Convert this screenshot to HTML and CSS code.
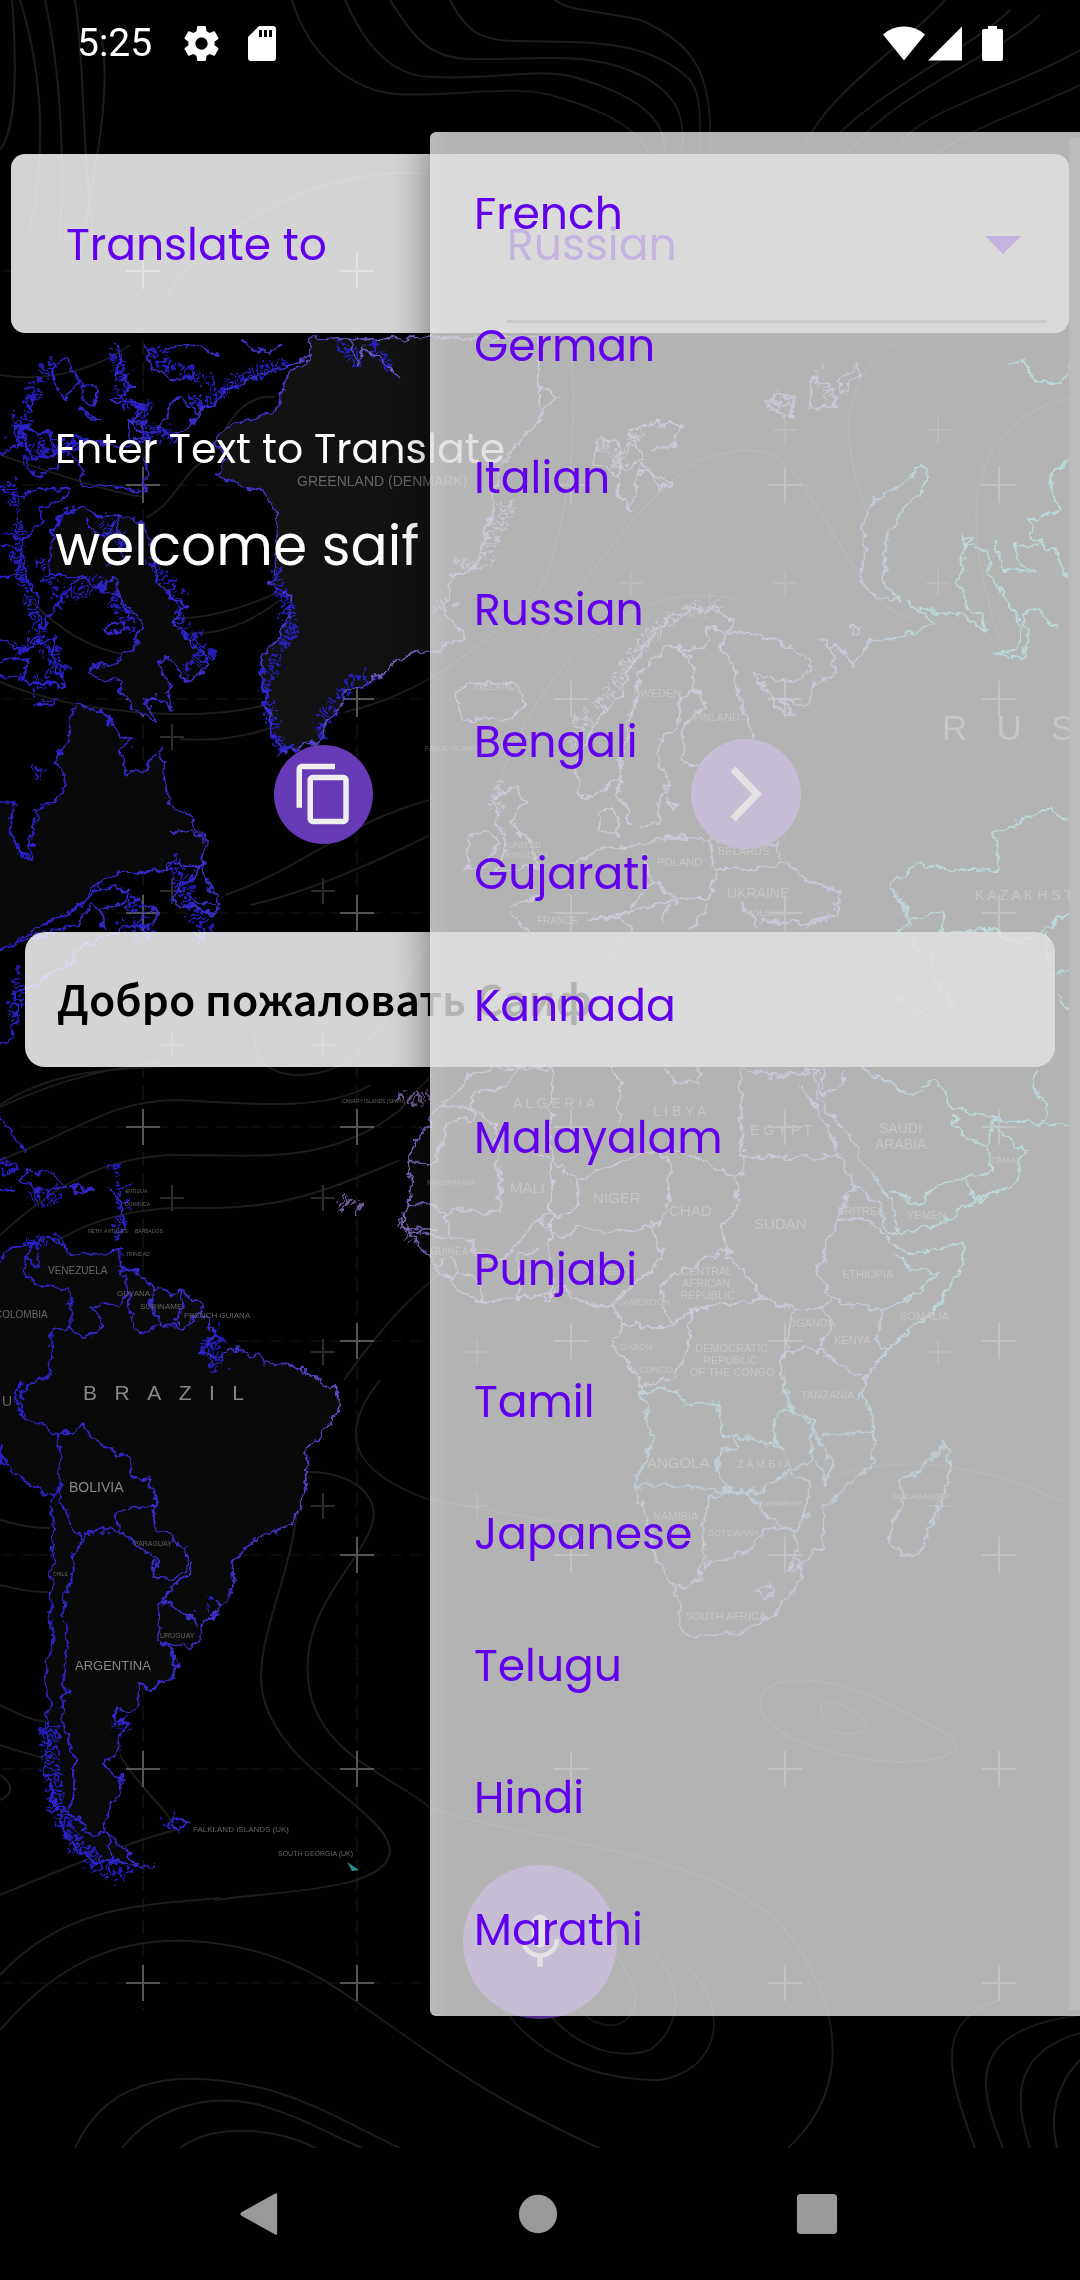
FILE: index.html
```html
<!DOCTYPE html>
<html lang="en">
<head>
<meta charset="utf-8">
<meta name="viewport" content="width=device-width, initial-scale=1">
<title>Translator</title>
<link rel="stylesheet" href="styles.css">
</head>
<body>
<svg class="map" viewBox="0 0 1080 2148" preserveAspectRatio="xMidYMin slice" aria-hidden="true">
  <defs>
    <linearGradient id="west" gradientUnits="userSpaceOnUse" x1="0" y1="0" x2="1568" y2="0">
      <stop offset="0" stop-color="#2a1fc8"/><stop offset=".5" stop-color="#3f33c4"/><stop offset=".75" stop-color="#7468c0"/><stop offset="1" stop-color="#8278c8"/>
    </linearGradient>
    <linearGradient id="east" gradientUnits="userSpaceOnUse" x1="0" y1="0" x2="1568" y2="0">
      <stop offset="0" stop-color="#8f70c0"/><stop offset=".35" stop-color="#8070c8"/><stop offset=".6" stop-color="#5c70d0"/><stop offset=".7" stop-color="#30c0c8"/><stop offset="1" stop-color="#20c8d0"/>
    </linearGradient>
    <linearGradient id="south" gradientUnits="userSpaceOnUse" x1="0" y1="0" x2="0" y2="600">
      <stop offset="0" stop-color="#30a8c0"/><stop offset=".5" stop-color="#5088c8"/><stop offset="1" stop-color="#8060c8"/>
    </linearGradient>
    <filter id="coast" filterUnits="userSpaceOnUse" x="0" y="0" width="1080" height="2148" color-interpolation-filters="sRGB">
      <feTurbulence type="fractalNoise" baseFrequency=".09" numOctaves="3" seed="4"/>
      <feDisplacementMap in="SourceGraphic" scale="13" xChannelSelector="R" yChannelSelector="G"/>
    </filter>
    <filter id="fjords" filterUnits="userSpaceOnUse" x="0" y="0" width="1080" height="2148" color-interpolation-filters="sRGB">
      <feTurbulence type="fractalNoise" baseFrequency=".11" numOctaves="2" seed="9"/>
      <feDisplacementMap in="SourceGraphic" scale="24" xChannelSelector="R" yChannelSelector="G"/>
    </filter>
    <pattern id="grid" patternUnits="userSpaceOnUse" x="36" y="164" width="214" height="214">
      <path d="M107 0V214" stroke="#1b1b1b" stroke-width="1" stroke-dasharray="14 8"/>
      <path d="M0 107H214" stroke="#161616" stroke-width="1" stroke-dasharray="12 8"/>
      <path d="M90 107H124M107 89V125" stroke="#555" stroke-width="2"/>
    </pattern>
    <g id="tick"><path d="M-12 0H12M0-13V13" stroke="#2c2c2c" stroke-width="2"/></g>
  </defs>

  <g class="contour">
    <path d="M292 0C310 60 355 90 395 94C450 98 520 82 560 98C620 115 640 135 650 154M345 0C365 45 390 75 430 77C500 80 530 68 570 76C640 95 665 120 665 150M390 0C415 40 430 58 470 59C540 60 590 50 640 75C680 95 685 120 682 150M450 0C465 30 480 42 520 41C590 42 650 40 690 80C705 100 698 140 700 150M555 0C570 12 600 10 640 20C700 45 712 80 710 150"/>
    <path d="M945 0C900 50 830 90 805 145M1010 10C970 50 860 100 825 150M1040 15C990 60 900 90 850 150M1080 50C1010 90 920 110 900 145M1080 85C1030 110 960 130 930 160"/>
    <path d="M20 0C45 80 45 160 30 230M45 0C60 70 65 150 60 240M75 0C85 60 82 170 95 250M0 150C15 130 18 80 12 0M100 30C115 90 90 190 80 260M165 300C210 220 340 160 440 175"/>
    <path d="M0 375C60 385 110 360 130 345M0 455C60 475 100 490 143 497M146 518C180 500 180 470 214 455C230 410 250 395 275 397M180 618C220 618 260 600 285 590M190 633C230 635 260 615 280 600M0 682C80 715 200 722 265 705M30 600C60 630 90 650 130 655M180 739C220 742 250 735 270 728M345 712C420 695 480 650 540 590C570 520 580 420 570 330"/>
    <path d="M225 895C300 870 350 820 430 800M250 905C320 890 400 850 430 835M0 1105C60 1065 130 1070 180 1065M255 1035C250 1080 310 1085 350 1060C390 1030 410 960 430 940M0 1107C60 1080 100 1070 160 1062M0 1160C80 1130 110 1100 180 1100C260 1105 330 1110 370 1085M0 1235C50 1190 100 1155 180 1155C260 1155 330 1165 400 1110C430 1070 480 1040 520 980M0 1300C40 1230 120 1205 200 1208C280 1210 330 1190 400 1160"/>
    <path d="M344 1380C400 1300 430 1280 500 1230M380 1380C340 1430 345 1470 430 1500C500 1510 560 1530 620 1520M308 1472C350 1472 385 1495 370 1530C355 1570 290 1620 312 1700C330 1760 400 1780 430 1808C560 1850 740 1850 800 1950C850 2030 840 2100 788 2148M297 1510C290 1580 255 1640 262 1690C275 1770 390 1810 390 1852C385 1890 290 1890 215 1900"/>
    <path d="M0 1520C20 1525 30 1528 50 1528M0 1585C20 1590 30 1592 48 1592M0 1705C20 1715 30 1720 46 1722M0 1745C30 1755 50 1760 70 1765M0 1775C15 1785 12 1795 0 1800M120 1755C140 1790 170 1810 175 1830C120 1845 60 1870 0 1895M0 1975C60 1910 130 1905 220 1898"/>
    <path d="M0 2030C60 1960 120 1938 190 1941C270 1945 320 1975 358 2003C420 2045 480 2095 599 2148M75 2148C110 2070 190 2070 270 2090C320 2105 350 2125 400 2148M122 2148C160 2100 220 2095 260 2105C310 2120 330 2135 362 2148M180 2148C210 2125 270 2125 316 2148"/>
    <path d="M505 2010C540 2060 600 2080 660 2080C720 2070 730 2010 690 1970M550 2015C580 2050 620 2060 650 2050C690 2020 680 1970 640 1940M580 2010C600 2035 640 2030 635 1990C630 1975 620 1960 615 1955M975 2148C950 2080 930 2020 1000 2000M1003 2148C975 2080 970 2030 1080 2015M1030 2148C1010 2090 1020 2050 1080 2033M1057 2148C1048 2110 1060 2080 1080 2060"/>
    <path d="M765 1690C790 1670 850 1680 920 1720C980 1745 960 1760 900 1762C830 1760 740 1730 765 1690ZM822 1703C840 1700 870 1718 866 1730C850 1738 815 1735 822 1703ZM870 520C830 420 850 370 900 340M540 640C600 560 650 490 700 460C790 430 790 470 850 560C870 600 890 610 910 620M500 780C560 620 660 580 740 600M1000 640C960 520 960 420 1080 395M840 1475C900 1455 980 1460 1080 1510"/>
  </g>
  <rect class="grid" y="160" width="1080" height="1850" fill="url(#grid)"/>
  <path d="M0 1900H1080V2148H0Z" fill="none"/>
  <g>
    <use href="#tick" x="172" y="1198"/><use href="#tick" x="323" y="1198"/><use href="#tick" x="172" y="1045"/><use href="#tick" x="323" y="1045"/><use href="#tick" x="172" y="891"/><use href="#tick" x="323" y="891"/><use href="#tick" x="172" y="737"/><use href="#tick" x="323" y="1352"/><use href="#tick" x="323" y="1506"/><use href="#tick" x="477" y="1352"/><use href="#tick" x="477" y="1506"/><use href="#tick" x="631" y="583"/><use href="#tick" x="785" y="583"/><use href="#tick" x="938" y="583"/><use href="#tick" x="785" y="430"/><use href="#tick" x="938" y="430"/><use href="#tick" x="938" y="1352"/><use href="#tick" x="938" y="1506"/>
  </g>

  <g filter="url(#coast)">
    <g class="coast" stroke="url(#west)">
      <g transform="translate(0 360) scale(.3444 .3635)">
        <path class="land-hi" d="M1568-60L900-60 900 0 830 50 820 95 800 140 720 160 640 200 625 230 660 260 630 320 700 345 770 365 800 410 805 500 800 560 790 620 850 650 840 700 810 760 760 820 770 900 775 960 795 1030 820 1075 880 1065 930 1040 950 990 990 950 1000 910 1060 890 1130 850 1180 810 1250 800 1350 760 1290 700 1310 600 1390 560 1430 400 1450 290 1568 160Z"/>
        <path class="land-lo" d="M150 590L150 480 180 420 240 405 300 430 370 430 420 450 440 540 460 600 490 650 540 680 500 720 540 760 570 790 610 820 580 860 540 885 510 840 490 815 460 830 480 870 500 930 500 960 450 930 420 930 460 1000 400 970 370 940 340 880 290 885 250 860 270 840 340 840 350 810 400 780 410 730 380 690 340 640 290 630 240 600Z"/>
        <path class="land-lo" d="M-20 1220L40 1220 30 1300 60 1360 90 1370 100 1240 180 1200 185 1150 160 1100 200 1050 215 950 310 970 340 1030 390 1040 350 1080 370 1140 430 1120 470 1060 475 1140 490 1220 560 1270 600 1320 580 1400 520 1385 430 1410 350 1405 280 1450 210 1515 100 1568-20 1640Z"/>
        <path d="M210 1515L300 1450 380 1460 350 1500 290 1510 300 1568M590 1380L550 1430 495 1490 560 1500 620 1530 640 1490 600 1440ZM500 1300L560 1290 590 1320M0 470L70 490 130 440 110 400 170 390 210 350 90 360 60 380 0 350M80 480L60 520 80 620 110 640 120 740 190 640 240 600 150 590M0 600L50 590 60 520 0 510M0 770L60 800 110 780 160 760 150 820 190 900 120 890 60 880 90 820 0 830M0 870L60 870M120 940L170 930 150 950 100 950M320 730L360 720 350 750 310 750ZM0 260L60 230 40 180 100 190 180 220 170 300 120 320 70 290M340 30L390 70 320 110 420 130 380 170 440 210 520 100 570 150 620 110 700 60 800 30 900-10M240 60L290 90 270 130 240 110ZM230 140L290 160 260 160ZM70 110L100 90 90 140ZM150 20L200 0 230 60 190 110 160 60ZM370 170L420 170 410 220 370 220ZM240 300L190 240 250 220 360 240 430 220 420 370 330 340 240 350ZM620 110L560 170 500 210 460 180M60 190L150 200 160 260 90 270ZM250 440L300 500 340 440M340 430L360 560 300 560M290 630L330 600 360 680 390 720M330-50L350 0 330 60M420-40L440 20 520 60 560 40M480-30L560-40 640-10M700-60L760-20 820-40M1010-60L1040 20 1060-40 1120 10 1160 50"/>
        <path d="M1320 910L1370 890 1500 895 1525 950 1460 990 1340 990ZM1440 1200L1500 1170 1520 1220 1480 1270 1540 1330 1565 1390 1440 1410 1480 1340 1440 1270ZM1370 1310L1420 1290 1450 1330 1400 1400 1350 1390ZM1470 1500L1568 1480M1480 1520L1530 1568"/>
      </g>
      <g transform="translate(0 900) scale(.3444 .3333)">
        <path d="M0 155L90 110 220 80 270 15 295 30 300 90M360 20L400 0 470 40 440 70 370 80 310 110 215 150 210 190 160 210 110 250 50 280 40 400 0 430M0 640L30 690 80 760M0 780L50 800 20 820 0 810M50 850L80 815 150 820 200 860 120 870ZM215 855L270 870 220 870ZM0 865L40 870M0 1320L40 1350 80 1390 145 1390M490 5L540 15 620 40M560 10L640 10M315 865L350 910 362 960 345 1020"/>
        <path class="land-lo" d="M-20 1100L30 1050 80 1040 110 1015 150 1020 190 1040 200 1065 280 1060 350 1050 350 1100 400 1120 450 1170 520 1175 580 1210 610 1280 620 1310 580 1360 640 1370 660 1345 740 1365 760 1390 850 1395 910 1430 970 1460 985 1500 980 1540 930 1600 890 1650 888 1740 875 1810 850 1880 770 1905 690 1960 675 2000 680 2050 640 2120 600 2160 580 2210 560 2240 500 2240 470 2220 500 2255 515 2300 500 2340 450 2365 400 2360 400 2410 380 2440 340 2425 335 2450 375 2480 350 2500 345 2560 305 2590 320 2620 355 2630 350 2670 305 2740 310 2800 400 2890 290 2890 220 2850 180 2780 160 2700 130 2620 140 2530 135 2450 145 2400 130 2330 155 2220 145 2080 155 1920 150 1795 60 1730-20 1660Z"/>
        <path d="M80 1060L70 1100 100 1150 205 1170 205 1290 240 1310 280 1290 300 1270 265 1220 350 1210 375 1180 380 1260 410 1300 460 1280 540 1280 590 1230M350 1100L375 1180M450 1170L440 1210 470 1280M520 1175L530 1220 510 1270M150 1285L150 1340 140 1430 70 1450 65 1500M100 1020L80 1060 100 1100 115 1060M205 1285L150 1285"/>
        <path class="land-lo" d="M1600 500L1510 500 1360 520 1340 570 1270 625 1230 690 1180 780 1195 830 1190 910 1165 950 1190 1010 1230 1050 1270 1100 1310 1150 1400 1215 1480 1190 1600 1195Z"/>
        <path d="M1280 615L1370 625 1370 660 1295 665 1290 730 1275 740 1270 785 1175 785M1370 600L1375 630 1440 680 1455 935 1350 935 1310 920 1290 950 1250 910 1190 910M1290 950L1310 1010 1370 1020 1380 1060 1430 1080 1480 1060 1568 950M1370 620L1370 580 1470 560 1510 500M1180 980L1260 985 1190 1000 1300 1010M1270 1090L1310 1070 1330 1110 1300 1150M1400 1215L1400 1160 1340 1110M1510 1190L1500 1060 1568 1050"/>
      </g>
      <g transform="translate(0 1380) scale(.3444 .3333)">
        <path d="M60 0L50 70 75 120 130 135 150 165 200 160 250 130 260 170 310 200 375 235 385 290 430 300 455 350 445 385 380 375 345 400 340 450 300 455 240 455 235 490 205 525 210 590 185 650 180 720 200 780 185 860 190 930 180 1010 195 1080 215 1120 215 1230 200 1300 240 1330 240 1360 310 1360M165 165L178 230 175 310 150 355M165 330L195 400 230 480M340 450L400 500 460 540 440 590 500 598 540 570 545 500 510 490 500 455 450 445 445 385M555 540L555 580 500 620 475 665 520 690 580 740M475 665L465 700 462 780M310 1360L330 1440 410 1460 450 1455M0 250L0 200M490 1335L510 1315 550 1330 520 1350ZM625 660L640 680 610 715"/>
      </g>
    </g>
    <g class="coast" stroke="url(#east)">
      <g transform="translate(540 360) scale(.3444 .3635)">
        <path d="M115 1190L105 1120 150 1010 230 930 270 830 350 730 430 690 500 685 570 715 540 745 610 755 700 775 760 810 790 850 750 885 680 880 615 855 650 900 690 960 740 975 690 930 780 945 800 880 850 870 850 790 820 770 880 800 910 840 960 770 1040 765 1110 735 1150 735 1075 665 1120 690 1200 695 1300 740 1290 710 1240 680 1215 610 1235 510 1295 520 1310 590 1360 670 1395 725 1385 800 1320 805 1400 825 1420 750 1400 700 1440 680 1500 740"/>
        <path d="M380 780L440 820 455 910 410 925 405 990 345 1050 345 1110 375 1160 345 1210 340 1270 280 1290M455 910L485 945 415 1010 425 1110 520 1120 600 1100M530 745L530 790 560 840 580 920 600 1000 620 1040M530 745L480 740 480 790 420 795 380 780M380 780L290 860 270 960 240 1060 230 1200 265 1280M115 1190L150 1210 200 1170 230 1150"/>
        <path d="M1110 290L1135 320 1070 400 1010 470 1000 560 1000 620 1050 660 980 655 930 610 940 540 940 440 980 380 1070 330ZM170 1250L210 1230 230 1260 220 1310 180 1290ZM90 1390L180 1340 300 1335 370 1310 490 1320 510 1400 490 1480 400 1480 320 1440 300 1350M490 1320L600 1330 690 1330 700 1380M510 1400L620 1400 720 1385 780 1430 870 1460 860 1520 770 1560M490 1490L440 1568M580 1500L640 1560M370 1490L360 1540M130 1540L250 1520 320 1440M1075 1568L1070 1530 1020 1450 1060 1410 1100 1385 1200 1405 1330 1400 1330 1340 1310 1300 1400 1270 1470 1235 1536 1270M1536 280L1490 310 1480 370 1520 410 1415 445 1430 490 1500 530 1530 600M1320 500L1350 580 1440 590 1390 560 1380 510 1450 510M900 740L930 730 930 750 910 760ZM1225 480L1255 490 1235 510ZM1360 10L1400 0 1430 50 1520 65 1536 20M165 215L230 225 235 300 300 280 260 200 320 170 405 180 390 240 320 240M235 300L215 350 265 415 290 300 380 340 350 360 300 290M160 220L160 280 230 320M0 70L50 100 0 150M370 1210L390 1220 380 1240ZM650 120L690 90 740 110 720 155ZM780 130L790 50 850 80 860 130ZM870 50L920 10 930 40 880 90Z"/>
      </g>
      <g transform="translate(540 900) scale(.3444 .3333)">
        <path d="M210 500L230 560 225 650 240 700M580 510L590 770 590 820 570 830 370 740 355 760 375 800 370 940 325 980M590 770L870 770M760 560L800 620 840 700 870 770 920 870 980 910 1010 1000 1040 1010M810 600L900 700 930 780 1000 860 1030 930 1040 1000 1170 970 1260 900 1370 860 1410 750 1330 690 1320 650 1300 740 1220 710 1200 650M1105 915L1150 860 1310 810 1305 745M1235 840L1260 900M1020 880L1105 915M1110 560L1150 545 1200 620 1290 650 1340 660 1536 680M1020 1030L1060 1065 1225 1030 1220 1100 1160 1220 1010 1350 940 1440 930 1500M985 1225L985 1340 1010 1360M1030 1060L1060 1100 1155 1120 1080 1195 1000 1225 910 1220 850 1190 800 1120 870 960 890 880 920 870M870 960L940 950 1020 1030M850 1190L820 1220 740 1230 710 1350 700 1400 720 1500M820 1220L845 1270 810 1350 930 1430M710 1350L810 1350M570 830L570 930 530 970 540 1050 370 1140 350 1180 360 1240 390 1270 440 1230 540 1215 650 1195 540 1050M650 1195L740 1230M440 1230L430 1330 390 1430 300 1460M0 950L80 945 110 900 108 840 0 760M110 840L350 740M0 960L60 1020 110 980 200 995 320 985 360 1070 270 1160 215 1210 240 1280M215 1210L130 1215 70 1160 0 1190M240 1280L210 1340 280 1420 295 1470 400 1470M240 1275L390 1275M940 505L1050 575 1110 575M820 500L820 585 880 560 880 510M580 510L690 530 800 510 810 600M360 500L400 550 460 550 460 500M1040 0L1080 50 1040 100 1130 160 1150 240 1200 320 1130 350 1030 290M1080 50L1170 40 1170 100 1250 90 1310 90 1400 130 1470 80 1536 45M1430 560L1440 500M1430 560L1480 630 1450 680M130 60L230 50 300 20 400 0M230 50L260 90 180 200M640 60L740 70 840 60M1470 100L1480 220 1536 220M1500 290L1536 330"/>
      </g>
    </g>
    <g class="coast" stroke="url(#south)" transform="translate(380 1380) scale(.4464 .4208)">
      <path d="M590 25L665 25 680 65 760 50 765 130 800 130 800 165 760 165 760 235 790 262 850 262 910 220 960 240 955 320 930 355 870 350 820 410 730 440 722 345 738 275 820 262M570 250L610 150 600 90 580 10M570 250L690 252 790 265M570 250L600 330 620 430 665 500 680 605 740 610 810 600 880 560 945 470 945 430 995 400 995 300 1060 240 1105 200 1105 110 1080 20M720 430L715 475 690 490 650 480M820 262L870 330 930 355 935 430M905 0L920 70 970 100 965 190 910 220M920 70L885 90 885 150 905 165 830 140 800 130M990 135L1105 120M975 190L1000 245 1015 200 990 160 970 100M1265 150L1280 220 1240 330 1210 410 1180 420 1145 400 1145 350 1170 300 1165 240 1215 210ZM845 500L875 485 882 505 858 525ZM915 435L935 425 940 445 920 450Z"/>
    </g>
  </g>
  <g class="fjord" filter="url(#fjords)">
    <path d="M277 570L285 600 292 630 275 660 265 680 266 700 272 720 277 745 290 752M318 735L332 705 348 685 368 678M150 560L165 580 180 600 180 620 195 640 208 655 185 668M112 600L125 620 135 635M15 650L45 640 60 670 30 690M50 360L30 400 15 440 50 450 90 440 20 460M115 350L125 380 120 400 145 410 150 430 180 440M160 360L195 375 215 385M150 350L170 365M190 400L210 400 235 380 260 370 290 360M340 345L360 365M370 345L395 370M10 480L20 520 15 560 30 600 40 640M170 860L195 900 175 880 205 930 190 945M130 900L150 935 120 925M115 1165L122 1200 118 1240M28 1200L60 1195M28 1245L60 1240M200 1355L215 1340 215 1370M40 560L60 600 80 590 110 580M100 520L130 550M20 970L13 1020"/>
    <path class="thick" d="M52 1725L50 1760 55 1800 70 1835 90 1858 110 1868 130 1878M120 1722L122 1730"/>
    <path d="M165 1825L185 1822M205 1610L215 1600M33 770L42 772"/>
    <path class="pale" d="M455 560L480 570 495 540 510 500M435 610L450 600M575 750L580 720 610 690 630 660 660 625 690 610 720 605M500 780L495 810M770 400L790 405M815 370L825 395 840 400M600 440L620 460 650 420M400 1100L430 1095M340 1198L360 1210M400 1220L410 1240"/>
  </g>
  <path d="M347 1862l12 8-7 1z" fill="#2c8f8a"/>

  <g class="labels">
    <text x="297" y="486" font-size="14">GREENLAND (DENMARK)</text>
    <text x="473" y="690" font-size="10">ICELAND</text>
    <text x="633" y="697" font-size="11">SWEDEN</text>
    <text x="693" y="721" font-size="11">FINLAND</text>
    <text x="657" y="866" font-size="11">POLAND</text>
    <text x="718" y="855" font-size="11">BELARUS</text>
    <text x="727" y="898" font-size="14">UKRAINE</text>
    <text x="745" y="916" font-size="9">MOLDOVA</text>
    <text x="537" y="924" font-size="10">FRANCE</text>
    <text x="508" y="848" font-size="9">UNITED</text>
    <text x="505" y="858" font-size="9">KINGDOM</text>
    <text x="425" y="751" font-size="7">FAROE ISLANDS</text>
    <text x="942" y="740" font-size="35">R&#160;&#160;&#160;U&#160;&#160;&#160;S</text>
    <text x="975" y="900" font-size="14">K A Z A K H S T</text>
    <text x="513" y="1108" font-size="14">A L G E R I A</text>
    <text x="653" y="1116" font-size="14">L I B Y A</text>
    <text x="750" y="1135" font-size="14">E G Y P T</text>
    <text x="879" y="1133" font-size="14">SAUDI</text>
    <text x="875" y="1149" font-size="14">ARABIA</text>
    <text x="510" y="1193" font-size="15">MALI</text>
    <text x="593" y="1203" font-size="15">NIGER</text>
    <text x="669" y="1216" font-size="15">CHAD</text>
    <text x="754" y="1229" font-size="15">SUDAN</text>
    <text x="837" y="1215" font-size="11">ERITREA</text>
    <text x="907" y="1219" font-size="11">YEMEN</text>
    <text x="991" y="1163" font-size="9">OMAN</text>
    <text x="842" y="1278" font-size="11">ETHIOPIA</text>
    <text x="900" y="1320" font-size="11">SOMALIA</text>
    <text x="834" y="1344" font-size="11">KENYA</text>
    <text x="788" y="1327" font-size="11">UGANDA</text>
    <text x="801" y="1399" font-size="11">TANZANIA</text>
    <text x="681" y="1275" font-size="11">CENTRAL</text>
    <text x="682" y="1287" font-size="11">AFRICAN</text>
    <text x="680" y="1299" font-size="11">REPUBLIC</text>
    <text x="617" y="1305" font-size="9">CAMEROON</text>
    <text x="620" y="1350" font-size="9">GABON</text>
    <text x="639" y="1373" font-size="9">CONGO</text>
    <text x="695" y="1352" font-size="11">DEMOCRATIC</text>
    <text x="703" y="1364" font-size="11">REPUBLIC</text>
    <text x="690" y="1376" font-size="11">OF THE CONGO</text>
    <text x="427" y="1185" font-size="8">MAURITANIA</text>
    <text x="430" y="1255" font-size="10">GUINEA</text>
    <text x="594" y="1275" font-size="10">NIGERIA</text>
    <text x="647" y="1468" font-size="15">ANGOLA</text>
    <text x="737" y="1468" font-size="11">Z A M B I A</text>
    <text x="653" y="1520" font-size="11">NAMIBIA</text>
    <text x="708" y="1536" font-size="9">BOTSWANA</text>
    <text x="760" y="1506" font-size="8">ZIMBABWE</text>
    <text x="685" y="1620" font-size="11">SOUTH AFRICA</text>
    <text x="893" y="1499" font-size="8">MADAGASCAR</text>
    <text x="48" y="1274" font-size="10">VENEZUELA</text>
    <text x="-5" y="1318" font-size="10">COLOMBIA</text>
    <text x="117" y="1296" font-size="8">GUYANA</text>
    <text x="140" y="1309" font-size="8">SURINAME</text>
    <text x="184" y="1318" font-size="8">FRENCH GUIANA</text>
    <text x="2" y="1406" font-size="14">U</text>
    <text x="83" y="1400" font-size="21" class="bright">B&#160;&#160;&#160;R&#160;&#160;&#160;A&#160;&#160;&#160;Z&#160;&#160;&#160;I&#160;&#160;&#160;L</text>
    <text x="69" y="1492" font-size="14" class="bright">BOLIVIA</text>
    <text x="75" y="1670" font-size="13" class="bright">ARGENTINA</text>
    <text x="134" y="1546" font-size="7">PARAGUAY</text>
    <text x="160" y="1638" font-size="7">URUGUAY</text>
    <text x="53" y="1576" font-size="5">CHILE</text>
    <text x="193" y="1832" font-size="8">FALKLAND ISLANDS (UK)</text>
    <text x="278" y="1856" font-size="7">SOUTH GEORGIA (UK)</text>
    <text x="342" y="1103" font-size="5">CANARY ISLANDS (SPAIN)</text>
    <text x="125" y="1193" font-size="5">ANTIGUA</text>
    <text x="125" y="1206" font-size="5">DOMINICA</text>
    <text x="135" y="1233" font-size="5">BARBADOS</text>
    <text x="88" y="1233" font-size="5">NETH. ANTILLES</text>
    <text x="126" y="1256" font-size="5">TRINIDAD</text>
  </g>
  <path d="M1069 138V2010H1080V138Z" fill="#2c2c2c"/>
</svg>

<header class="status">
  <span class="time">5:25</span>
  <svg class="gear" viewBox="2 2 20 20" aria-label="Settings"><path fill="#fff" fill-rule="evenodd" d="M19.43 12.98c.04-.32.07-.64.07-.98s-.03-.66-.07-.98l2.11-1.65c.19-.15.24-.42.12-.64l-2-3.46c-.12-.22-.39-.3-.61-.22l-2.49 1c-.52-.4-1.08-.73-1.69-.98l-.38-2.65C14.46 2.18 14.25 2 14 2h-4c-.25 0-.46.18-.49.42l-.38 2.65c-.61.25-1.17.59-1.69.98l-2.49-1c-.23-.09-.49 0-.61.22l-2 3.46c-.13.22-.07.49.12.64l2.11 1.65c-.04.32-.07.65-.07.98s.03.66.07.98l-2.11 1.65c-.19.15-.24.42-.12.64l2 3.46c.12.22.39.3.61.22l2.49-1c.52.4 1.08.73 1.69.98l.38 2.65c.03.24.24.42.49.42h4c.25 0 .46-.18.49-.42l.38-2.65c.61-.25 1.17-.59 1.69-.98l2.49 1c.23.09.49 0 .61-.22l2-3.46c.12-.22.07-.49-.12-.64l-2.11-1.65zM12 15.5c-1.93 0-3.5-1.57-3.5-3.5s1.57-3.5 3.5-3.5 3.5 1.57 3.5 3.5-1.57 3.5-3.5 3.5z"/></svg>
  <svg class="sd" viewBox="0 0 28 35" aria-label="Storage"><path fill="#fff" fill-rule="evenodd" d="M11 0H25q3 0 3 3V32q0 3-3 3H3q-3 0-3-3V11ZM11 4V11H14V4ZM16 4V11H19V4ZM21 4V11H24V4Z"/></svg>
  <span class="signals">
    <svg class="wifi" viewBox="0 0 42 34" aria-label="Wi-Fi"><path fill="#fff" d="M21 34L0 8Q9 0 21 0T42 8Z"/></svg>
    <svg class="cell" viewBox="0 0 34 34" aria-label="Signal"><path fill="#fff" d="M34 0V34H0Z"/></svg>
    <svg class="battery" viewBox="0 0 21 35" aria-label="Battery"><path fill="#fff" d="M6 0H15V3H19Q21 3 21 5V33Q21 35 19 35H2Q0 35 0 33V5Q0 3 2 3H6Z"/></svg>
  </span>
</header>

<main class="app">
  <section class="card target">
    <label for="lang">Translate to</label>
    <div class="spinner">
      <select id="lang"><option>Russian</option></select>
      <svg class="caret" viewBox="0 0 36 18" aria-hidden="true"><path d="M0 0H36L18 18Z" fill="#6200ee"/></svg>
    </div>
  </section>

  <section class="source">
    <label for="text">Enter Text to Translate</label>
    <input id="text" type="text" value="welcome saif">
  </section>

  <div class="actions">
    <button class="round copy" type="button" aria-label="Copy"><svg viewBox="0 0 24 24"><path fill="#eee" d="M16 1H4c-1.1 0-2 .9-2 2v14h2V3h12V1zm3 4H8c-1.1 0-2 .9-2 2v14c0 1.1.9 2 2 2h11c1.1 0 2-.9 2-2V7c0-1.1-.9-2-2-2zm0 16H8V7h11v14z"/></svg></button>
    <button class="round go" type="button" aria-label="Translate"><svg viewBox="0 0 66 66"><path d="M20 8L44 33 20 58" fill="none" stroke="#fff" stroke-width="7"/></svg></button>
  </div>

  <output class="card result" for="text">Добро пожаловать Саиф</output>

  <button class="round mic" type="button" aria-label="Speak"><svg viewBox="0 0 24 24"><path fill="#fff" d="M12 14c1.66 0 2.99-1.34 2.99-3L15 5c0-1.66-1.34-3-3-3S9 3.340 9 5v6c0 1.660 1.340 3 3 3zm5.300-3c0 3-2.540 5.100-5.300 5.100S6.700 14 6.700 11H5c0 3.410 2.720 6.230 6 6.720V21h2v-3.280c3.280-.48 6-3.300 6-6.720h-1.700z"/></svg></button>
</main>

<div class="menu" role="listbox" aria-label="Language">
  <button type="button" role="option">French</button>
  <button type="button" role="option">German</button>
  <button type="button" role="option">Italian</button>
  <button type="button" role="option" aria-selected="true">Russian</button>
  <button type="button" role="option">Bengali</button>
  <button type="button" role="option">Gujarati</button>
  <button type="button" role="option">Kannada</button>
  <button type="button" role="option">Malayalam</button>
  <button type="button" role="option">Punjabi</button>
  <button type="button" role="option">Tamil</button>
  <button type="button" role="option">Japanese</button>
  <button type="button" role="option">Telugu</button>
  <button type="button" role="option">Hindi</button>
  <button type="button" role="option">Marathi</button>
</div>

<nav class="navbar">
  <button type="button" aria-label="Back"><svg viewBox="0 0 46 46"><path d="M42 3V43Q42 46 39 44L5 25Q2 23 5 21L39 2Q42 0 42 3Z" fill="#999"/></svg></button>
  <button type="button" aria-label="Home"><svg viewBox="0 0 46 46"><circle cx="23" cy="23" r="20" fill="#999"/></svg></button>
  <button type="button" aria-label="Recents"><svg viewBox="0 0 46 46"><rect x="2" y="2" width="42" height="42" rx="4" fill="#999"/></svg></button>
</nav>
</body>
</html>
```
FILE: styles.css
```css
* {
  box-sizing: border-box;
}

body {
  margin: 0;
  min-height: 100vh;
  display: flex;
  flex-direction: column;
  position: relative;
  background: #000;
  color: #fff;
  font-family: Poppins, Inter, sans-serif;
  overflow-x: hidden;
}

button {
  border: 0;
  padding: 0;
  background: none;
  font: inherit;
  color: inherit;
}

/* World map artwork behind the whole screen */
.map {
  position: absolute;
  top: 0;
  left: 0;
  width: 100%;
  height: calc(100% - 132px);
  background: #010101;
  z-index: -1;
}

.contour {
  fill: none;
  stroke: #1c1c1c;
  stroke-width: 2;
}

.coast path {
  fill: none;
  stroke-width: 2;
  vector-effect: non-scaling-stroke;
  stroke-linejoin: round;
}

.coast .land-hi {
  fill: #121212;
}

.coast .land-lo {
  fill: #090909;
}

.fjord {
  fill: none;
  stroke: #2b22d8;
  stroke-width: 11;
  stroke-dasharray: 3 4;
  opacity: .8;
}

.fjord .thick {
  stroke-width: 17;
}

.fjord .pale {
  stroke: #8a70b8;
}

.labels {
  fill: #666;
  font-family: "Liberation Sans", Arial, sans-serif;
}

.labels .bright {
  fill: #888;
}

/* Status bar */
.status {
  display: flex;
  align-items: center;
  height: 86px;
  padding: 0 77px;
  font-family: Roboto, sans-serif;
  font-size: 39px;
}

.gear {
  width: 35px;
  height: 35px;
  margin-left: 32px;
}

.sd {
  width: 28px;
  height: 35px;
  margin-left: 29px;
}

.signals {
  display: flex;
  margin-left: auto;
}

.wifi {
  width: 42px;
  height: 35px;
}

.cell {
  width: 34px;
  height: 35px;
  margin: 0 20px 0 3px;
}

.battery {
  width: 21px;
  height: 35px;
}

/* App content */
.app {
  flex: 1;
  display: flex;
  flex-direction: column;
  padding: 68px 11px 129px;
}

.card {
  background: rgba(255, 255, 255, .83);
}

.target {
  display: flex;
  height: 179px;
  border-radius: 14px;
  color: #6200ee;
  font-size: 44px;
}

.target label {
  width: 430px;
  padding-left: 55px;
  line-height: 181px;
}

.spinner {
  flex: 1;
  display: flex;
  align-items: center;
  margin: 0 22px 10px 66px;
  border-bottom: 3px solid rgba(0, 0, 0, .4);
}

.spinner select {
  flex: 1;
  height: 60px;
  margin-top: 13px;
  padding: 0;
  border: 0;
  background: none;
  appearance: none;
  font: inherit;
  color: inherit;
}

.caret {
  width: 36px;
  height: 18px;
  margin: 16px 26px 0 0;
}

.source {
  display: flex;
  flex-direction: column;
  padding: 86px 44px 0;
}

.source label {
  font-size: 41px;
  line-height: 60px;
}

.source input {
  height: 80px;
  margin-top: 26px;
  padding: 0;
  border: 0;
  background: none;
  font: inherit;
  font-size: 55px;
  color: inherit;
  outline: 0;
}

.actions {
  display: flex;
  align-items: center;
  justify-content: space-between;
  margin-top: 154px;
  padding: 0 268px 0 263px;
}

.round {
  display: flex;
  align-items: center;
  justify-content: center;
  border-radius: 50%;
  background: #673ab7;
}

.round svg {
  width: 66px;
  height: 66px;
}

.copy {
  width: 99px;
  height: 99px;
}

.go {
  width: 110px;
  height: 110px;
}

.result {
  display: block;
  height: 135px;
  margin: 83px 14px 0;
  padding-left: 32px;
  border-radius: 20px;
  color: #000;
  font-family: "Source Sans 3", "Noto Sans CJK SC", sans-serif;
  font-size: 48px;
  font-weight: 600;
  line-height: 139px;
}

.mic {
  width: 154px;
  height: 154px;
  margin: auto auto 0;
}

/* Drop-down list floating over the screen */
.menu {
  position: absolute;
  top: 132px;
  left: 430px;
  right: 0;
  display: flex;
  flex-direction: column;
  padding: 15px 0 21px;
  border-radius: 6px 0 0 6px;
  background: rgba(220, 220, 220, .815);
  box-shadow: 0 4px 40px rgba(0, 0, 0, .45), inset 24px 0 24px -20px rgba(255, 255, 255, .18);
  color: #6200ee;
  font-size: 44px;
}

.menu button {
  height: 132px;
  padding-left: 44px;
  text-align: left;
}

/* System navigation */
.navbar {
  display: flex;
  align-items: center;
  justify-content: space-between;
  height: 132px;
  padding: 0 241px 0 237px;
  background: #000;
}

.navbar button,
.navbar svg {
  display: block;
  width: 44px;
  height: 44px;
}
```
